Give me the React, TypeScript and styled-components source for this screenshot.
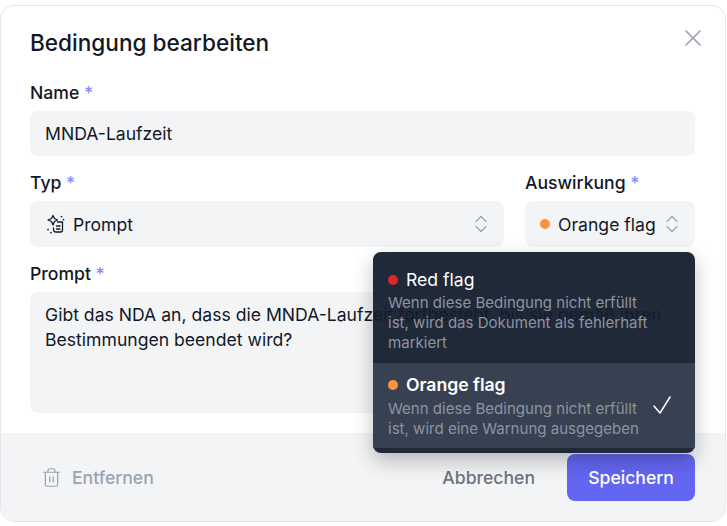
import React from "react";
import styled, { createGlobalStyle } from "styled-components";
import { ChevronDown, ChevronUp, Trash2, X } from "lucide-react";

const GlobalStyle = createGlobalStyle`
  html, body {
    margin: 0;
    background: #ffffff;
    font-family: Inter, "Liberation Sans", sans-serif;
  }
`;

const Page = styled.div`
  width: 727px;
  height: 526px;
  padding-top: 5px;
  box-sizing: border-box;
  overflow: hidden;
`;

const Modal = styled.div`
  position: relative;
  width: 726px;
  height: 517px;
  box-sizing: border-box;
  border: 1px solid #e5e7eb;
  border-radius: 14px;
  background: #ffffff;
  overflow: hidden;
  display: flex;
  flex-direction: column;
`;

const Body = styled.div`
  flex: 1;
  padding: 22px 30px 20px 29px;
  display: flex;
  flex-direction: column;
`;

const Title = styled.h2`
  margin: 0 0 23px;
  font-size: 22.6px;
  line-height: 30px;
  font-weight: 500;
  color: #111827;
`;

const CloseButton = styled.button`
  position: absolute;
  top: 18px;
  right: 18px;
  padding: 0;
  border: 0;
  background: none;
  color: #9ca3af;
  display: flex;
`;

const Field = styled.div<{ $width?: number }>`
  display: flex;
  flex-direction: column;
  gap: 6px;
  min-width: 0;
  flex: ${(p) => (p.$width ? `0 0 ${p.$width}px` : "1")};
`;

const Label = styled.label`
  font-size: 17.6px;
  line-height: 24px;
  font-weight: 500;
  color: #111827;
  & > span {
    color: #818cf8;
  }
`;

const Input = styled.div`
  height: 45px;
  box-sizing: border-box;
  padding: 0 15px;
  display: flex;
  align-items: center;
  border-radius: 8px;
  background: #f3f4f6;
  font-size: 17.6px;
  color: #111827;
`;

const SelectBox = styled(Input)`
  height: 46px;
  justify-content: space-between;
  padding-right: 18px;
`;

const SelectValue = styled.div`
  display: flex;
  align-items: center;
  gap: 8px;
  white-space: nowrap;
`;

const Row = styled.div`
  margin-top: 15px;
  display: flex;
  gap: 21px;
`;

const Stacked = styled.div`
  margin-top: 15px;
`;

const Chevrons = styled.div`
  display: flex;
  flex-direction: column;
  color: #9ca3af;
  & > svg {
    display: block;
    margin: -5px -5px;
  }
`;

const Dot = styled.span<{ $color: string }>`
  width: 10px;
  height: 10px;
  border-radius: 50%;
  background: ${(p) => p.$color};
  flex: none;
`;

const TextArea = styled.div`
  height: 121px;
  box-sizing: border-box;
  padding: 10px 15px;
  border-radius: 8px;
  background: #f3f4f6;
  font-size: 17.6px;
  line-height: 25px;
  color: #111827;
`;

const Footer = styled.div`
  height: 88px;
  box-sizing: border-box;
  padding: 20px 30px 19px 29px;
  background: #f3f4f6;
  display: flex;
  align-items: center;
  justify-content: space-between;
`;

const RemoveButton = styled.button`
  padding: 0 0 0 11px;
  border: 0;
  background: none;
  display: flex;
  align-items: center;
  gap: 10px;
  font: 500 17.6px Inter, sans-serif;
  color: #9ca3af;
`;

const Actions = styled.div`
  display: flex;
  align-items: center;
  gap: 32px;
`;

const CancelButton = styled.button`
  padding: 0;
  border: 0;
  background: none;
  font: 500 17.6px Inter, sans-serif;
  color: #6b7280;
`;

const SaveButton = styled.button`
  width: 128px;
  height: 47px;
  border: 0;
  border-radius: 8px;
  background: #6366f1;
  font: 500 17.6px Inter, sans-serif;
  color: #ffffff;
`;

const Menu = styled.div`
  position: absolute;
  left: 372px;
  top: 246px;
  width: 322px;
  height: 201px;
  box-sizing: border-box;
  padding-bottom: 5px;
  border-radius: 8px;
  background: rgba(20, 30, 45, 0.95);
  box-shadow: 0 8px 20px rgba(0, 0, 0, 0.25);
  overflow: hidden;
`;

const MenuItem = styled.div<{ $active?: boolean }>`
  position: relative;
  padding: ${(p) => (p.$active ? "10px 15px 9px" : "16px 15px 10px")};
  background: ${(p) => (p.$active ? "#374151" : "transparent")};
`;

const MenuTitle = styled.div<{ $active?: boolean }>`
  display: flex;
  align-items: center;
  gap: 8px;
  font-size: 17.6px;
  line-height: 24px;
  font-weight: ${(p) => (p.$active ? 600 : 400)};
  color: #ffffff;
`;

const MenuText = styled.div<{ $active?: boolean }>`
  width: 266px;
  margin-top: ${(p) => (p.$active ? "2px" : "1px")};
  font-size: 15.05px;
  line-height: 20px;
  color: #8d94a1;
`;

const CheckMark = styled.svg`
  position: absolute;
  right: 23px;
  top: 32px;
  width: 20px;
  height: 20px;
  fill: none;
  stroke: #ffffff;
  stroke-width: 1.5;
  stroke-linecap: round;
  stroke-linejoin: round;
`;

function SelectChevrons() {
  return (
    <Chevrons>
      <ChevronUp size={20} strokeWidth={1.5} />
      <ChevronDown size={20} strokeWidth={1.5} />
    </Chevrons>
  );
}

function PromptIcon() {
  return (
    <svg width="20" height="20" viewBox="0 0 20 20" fill="none" stroke="#111827" strokeWidth="1.3" strokeLinecap="round" strokeLinejoin="round">
      <path d="M8 1.500l1.500 3 3 1.500-3 1.500-1.500 3.500-1.500-3.500-3.500-1.500 3.500-1.500z" />
      <path d="M12.500 8h5v8a2 2 0 0 1-2 2h-4.500a2.500 2.500 0 0 1-2.500-2.500v-1.500" />
      <path d="M11.500 12h3.500M11.500 15h3.500" />
      <path d="M16.500 2.500v.1M18.500 5.500v.1M3 15.500v.1M6 18.500v.1" strokeWidth="1.700" />
    </svg>
  );
}

export default function App() {
  return (
    <Page>
      <GlobalStyle />
      <Modal>
        <Body>
          <Title>Bedingung bearbeiten</Title>
          <CloseButton>
            <X size={28} strokeWidth={1.4} />
          </CloseButton>
          <Field>
            <Label>
              Name <span>*</span>
            </Label>
            <Input>MNDA-Laufzeit</Input>
          </Field>
          <Row>
            <Field>
              <Label>
                Typ <span>*</span>
              </Label>
              <SelectBox>
                <SelectValue>
                  <PromptIcon />
                  Prompt
                </SelectValue>
                <SelectChevrons />
              </SelectBox>
            </Field>
            <Field $width={170}>
              <Label>
                Auswirkung <span>*</span>
              </Label>
              <SelectBox>
                <SelectValue>
                  <Dot $color="#fb923c" />
                  Orange flag
                </SelectValue>
                <SelectChevrons />
              </SelectBox>
            </Field>
          </Row>
          <Stacked>
            <Field>
              <Label>
                Prompt <span>*</span>
              </Label>
              <TextArea>
                Gibt das NDA an, dass die MNDA-Laufzeit fortbesteht, bis sie gemäß ihren Bestimmungen beendet wird?
              </TextArea>
            </Field>
          </Stacked>
        </Body>
        <Footer>
          <RemoveButton>
            <Trash2 size={21} strokeWidth={1.4} />
            Entfernen
          </RemoveButton>
          <Actions>
            <CancelButton>Abbrechen</CancelButton>
            <SaveButton>Speichern</SaveButton>
          </Actions>
        </Footer>
        <Menu>
          <MenuItem>
            <MenuTitle>
              <Dot $color="#dc2626" />
              Red flag
            </MenuTitle>
            <MenuText>Wenn diese Bedingung nicht erfüllt ist, wird das Dokument als fehlerhaft markiert</MenuText>
          </MenuItem>
          <MenuItem $active>
            <MenuTitle $active>
              <Dot $color="#fb923c" />
              Orange flag
            </MenuTitle>
            <MenuText $active>Wenn diese Bedingung nicht erfüllt ist, wird eine Warnung ausgegeben</MenuText>
            <CheckMark viewBox="0 0 20 20">
              <path d="M2 11l6 7L18 2" />
            </CheckMark>
          </MenuItem>
        </Menu>
      </Modal>
    </Page>
  );
}
